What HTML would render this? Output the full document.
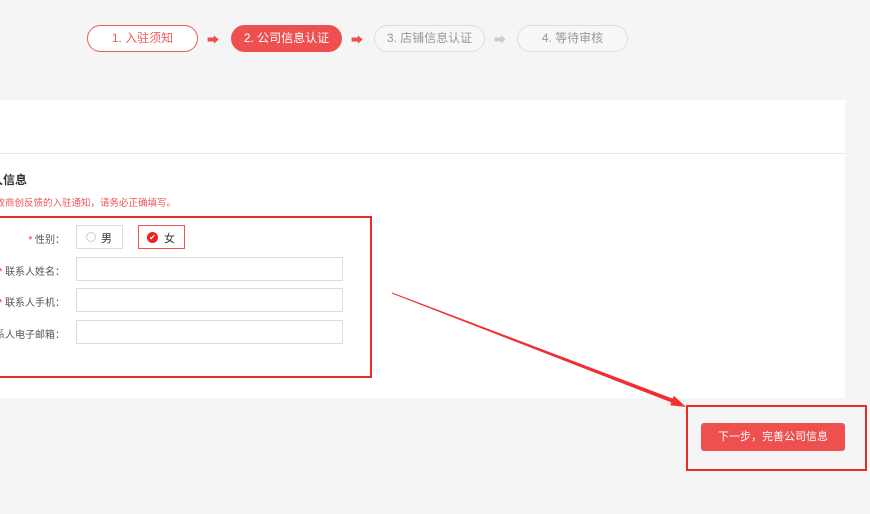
<!DOCTYPE html>
<html><head><meta charset="utf-8"><style>
*{margin:0;padding:0;box-sizing:border-box}
body{width:870px;height:514px;background:#f5f5f5;position:relative;overflow:hidden;font-family:"Liberation Sans","Noto Sans CJK SC",sans-serif;font-size:12px;color:#333}
.a{position:absolute}
.clip{position:absolute;left:0;top:0;width:870px;height:514px;overflow:hidden}
.pill{position:absolute;top:25px;height:27px;width:111px;border-radius:14px;text-align:center;line-height:25px;font-size:12px;border:1px solid #ddd;color:#999;background:#f7f7f7}
.arr{position:absolute;top:31px;font-size:12px}
.lbl{position:absolute;right:805px;white-space:nowrap;font-size:10px;color:#555}
.lbl b{color:#e33;font-weight:normal}
.inp{position:absolute;left:76px;width:267px;height:24px;border:1px solid #ddd;background:#fff}
</style></head><body><div class="clip">
<div class="pill" style="left:87px;border-color:#ee5a5a;color:#ee5a5a;background:#fff">1. 入驻须知</div>
<div class="arr" style="left:207px;color:#ee5050">➡</div>
<div class="pill" style="left:231px;background:#ee5050;border-color:#ee5050;color:#fff">2. 公司信息认证</div>
<div class="arr" style="left:351px;color:#ee5050">➡</div>
<div class="pill" style="left:374px">3. 店铺信息认证</div>
<div class="arr" style="left:494px;color:#ccc">➡</div>
<div class="pill" style="left:517px">4. 等待审核</div>

<div class="a" style="left:0;top:100px;width:845px;height:298px;background:#fff"></div>
<div class="a" style="left:0;top:153px;width:845px;height:1px;background:#e8e8e8"></div>
<div class="a" style="right:843px;top:171px;font-weight:bold;font-size:12px;white-space:nowrap">联系人信息</div>
<div class="a" style="right:694px;top:195px;font-size:9.5px;color:#e55;white-space:nowrap">用于接收商创反馈的入驻通知，请务必正确填写。</div>

<div class="lbl" style="top:231px"><b>* </b>性别：</div>
<div class="a" style="left:76px;top:225px;width:47px;height:24px;border:1px solid #ddd;background:#fff">
 <span class="a" style="left:9px;top:6px;width:10px;height:10px;border:1px solid #ccc;border-radius:50%"></span>
 <span class="a" style="left:24px;top:4px;font-size:11px">男</span></div>
<div class="a" style="left:138px;top:225px;width:47px;height:24px;border:1px solid #e55;background:#fff">
 <span class="a" style="left:8px;top:6px;width:11px;height:11px;background:#e22;border-radius:50%;color:#fff;font-size:8px;line-height:11px;text-align:center">✔</span>
 <span class="a" style="left:25px;top:4px;font-size:11px">女</span></div>

<div class="lbl" style="top:263px"><b>* </b>联系人姓名：</div>
<div class="inp" style="top:257px"></div>
<div class="lbl" style="top:294px"><b>* </b>联系人手机：</div>
<div class="inp" style="top:288px"></div>
<div class="lbl" style="top:326px">联系人电子邮箱：</div>
<div class="inp" style="top:320px"></div>

<div class="a" style="left:-4px;top:216px;width:376px;height:162px;border:2px solid #e82c2c"></div>

<svg class="a" style="left:0;top:0" width="870" height="514"><polygon points="392,292.5 672.7,398.6 673.8,395.8 686,407 670.2,405.2 671.3,402.4 391.8,293.5" fill="#f03030"/></svg>

<div class="a" style="left:686px;top:405px;width:181px;height:66px;border:2px solid #e82c2c"></div>
<div class="a" style="left:701px;top:423px;width:144px;height:28px;background:#ee5050;border-radius:3px;color:#fff;text-align:center;line-height:28px;font-size:11px">下一步，完善公司信息</div>
</div></body></html>
